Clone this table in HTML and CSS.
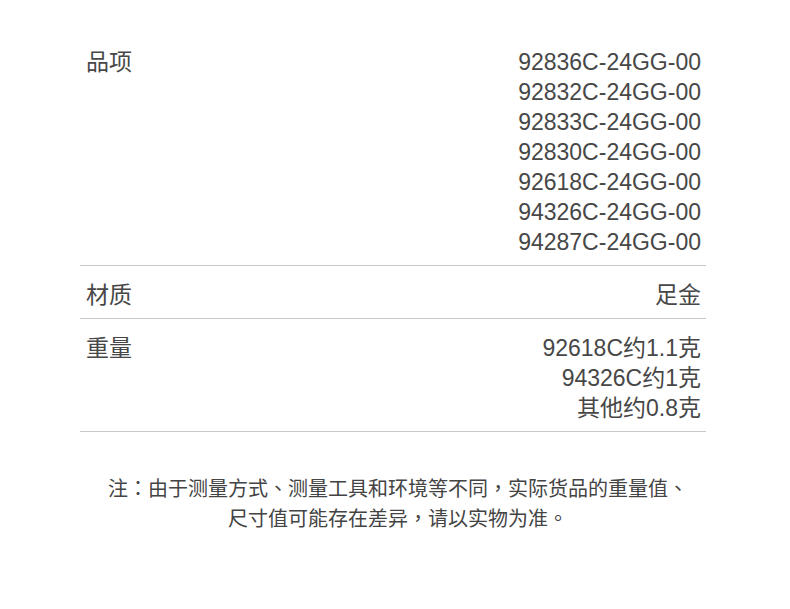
FILE: index.html
```html
<!DOCTYPE html>
<html>
    <head>
        <meta charset="utf-8" />
        <title>商品参数</title>
        <link rel="stylesheet" href="styles.css">
    </head>
    <body>
        <div class="specs">
            <div class="row">
                <div class="label">品项</div>
                <div class="value">
                    <p>92836C-24GG-00</p>
                    <p>92832C-24GG-00</p>
                    <p>92833C-24GG-00</p>
                    <p>92830C-24GG-00</p>
                    <p>92618C-24GG-00</p>
                    <p>94326C-24GG-00</p>
                    <p>94287C-24GG-00</p>
                </div>
            </div>
            <div class="row">
                <div class="label">材质</div>
                <div class="value"><p>足金</p></div>
            </div>
            <div class="row">
                <div class="label">重量</div>
                <div class="value">
                    <p>92618C约1.1克</p>
                    <p>94326C约1克</p>
                    <p>其他约0.8克</p>
                </div>
            </div>
        </div>
        <div class="note">
            <p>注：由于测量方式、测量工具和环境等不同，实际货品的重量值、</p>
            <p>尺寸值可能存在差异，请以实物为准。</p>
        </div>
    </body>
</html>
```

FILE: styles.css
```css
/** Reset **/
html, body, div, p {
  margin: 0;
  padding: 0;
}
*,
*:before,
*:after {
  box-sizing: border-box;
}

/** Page **/
body {
  background: #fff;
  color: #474747;
  font-family: "Liberation Sans", Arial, "Noto Sans CJK SC", sans-serif;
}

.specs {
  width: 626px;
  margin: 32px 0 0 80px;
}

.row {
  display: flex;
  justify-content: space-between;
  padding: 14px 5px 8px 6px;
  border-bottom: 1px solid #c8c8c8;
  font-size: 23px;
  line-height: 30px;
}
.row:first-child {
  padding-top: 15px;
}

.value {
  text-align: right;
}

/* punctuation sits centred in the reference, as in the TC face */
.note {
  margin-top: 41px;
  padding-left: 6px;
  text-align: center;
  font-family: "Noto Sans CJK TC", "Noto Sans CJK SC", sans-serif;
  font-size: 20px;
  line-height: 30px;
  color: #444;
}
```
